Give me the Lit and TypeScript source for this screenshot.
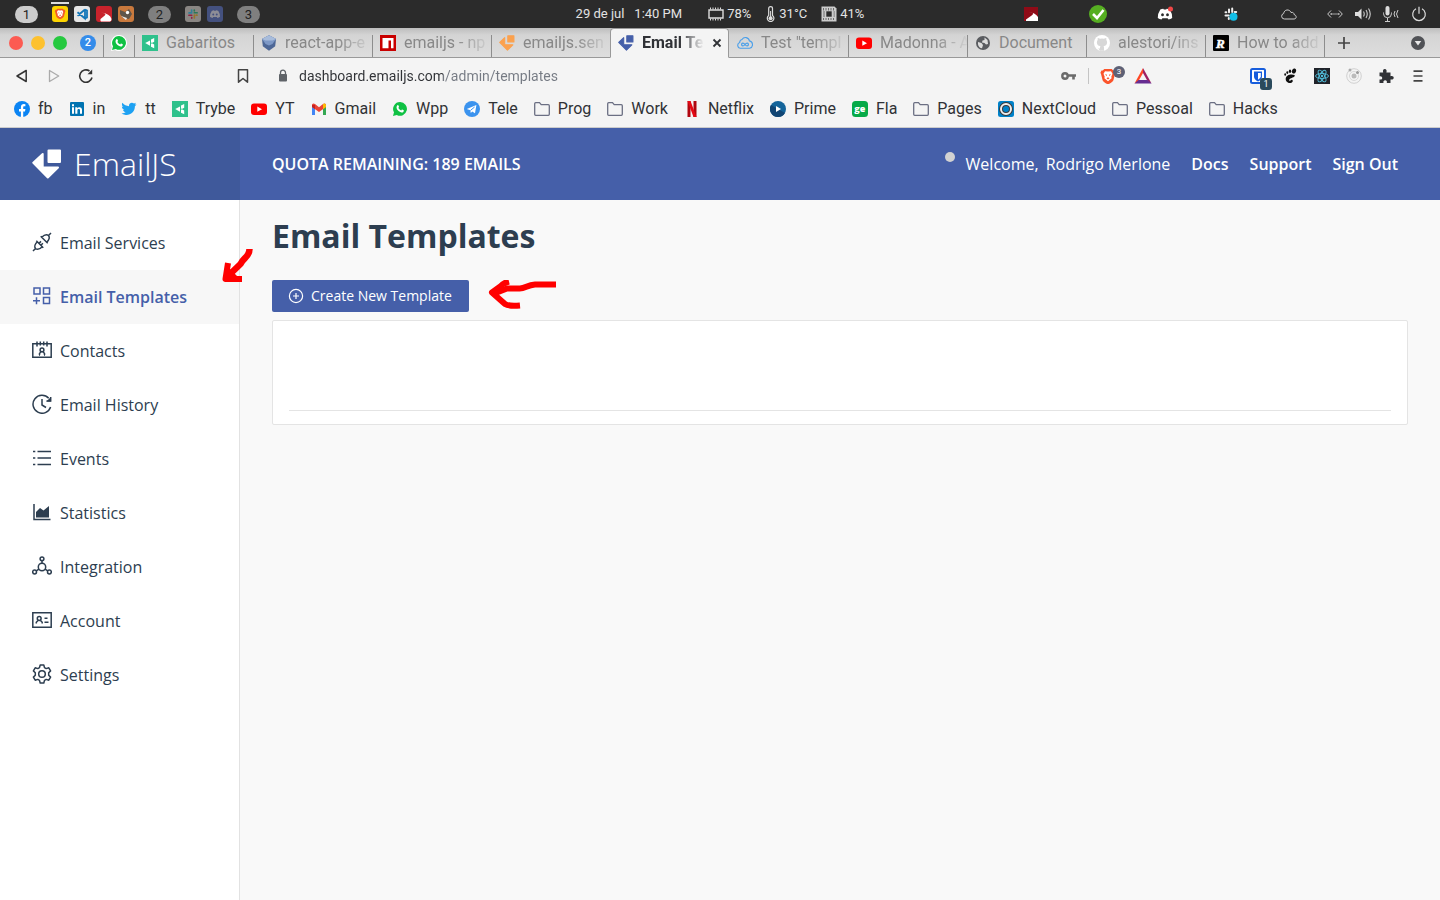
import { LitElement, html, css, svg, nothing, TemplateResult } from "lit";
import { customElement } from "lit/decorators.js";
import { classMap } from "lit/directives/class-map.js";

const icon = (box: string, body: unknown, cls = "i16") =>
  html`<svg class=${cls} viewBox=${box} fill="none" aria-hidden="true">${body}</svg>`;
const B = "0 0 16 16";

const whatsapp = (ring = false) => icon(B, svg`
  ${ring ? svg`<path d="M8 0a8 8 0 1 1-3.900 15L0 16l1-4A8 8 0 0 1 8 0z" fill="#fff"/>` : nothing}
  <path d="M8.100 1a6.900 6.900 0 1 1-3.300 13L1 15l1-3.700A6.900 6.900 0 0 1 8.100 1z" fill="#0fc143"/>
  <path d="M5.400 4.300c.5-.4.900-.2 1.100.3l.5 1.200c.1.300-.5.900-.6 1.100.7 1.300 1.600 2 2.800 2.500.3-.2.700-.9 1-.9l1.500.8c.3.200 0 1.200-.4 1.600-1.300 1.200-3.700.3-5.300-1.300S3.900 5.600 5.400 4.300z" fill="#fff"/>`);
const trybe = () => icon(B, svg`<path d="M0 0h16v16H0z" fill="#2fc18c"/><path d="M3.200 8.100L8 5.500v5.200zM9 7.300V4.500l3.200-1.600v3.900L9.800 8zM9 8.900l.8-.7 2.400 1.200v3.900L9 11.700z" fill="#fff"/>`);
const youtube = () => icon(B, svg`<rect y="2.500" width="16" height="11.500" rx="3" fill="#f00"/><path d="M6.300 5.600L11 8.200l-4.700 2.600z" fill="#fff"/>`);
const folder = () => icon(B, svg`<path d="M.7 13.300V2.700Q.7 1.700 1.700 1.700H5.500L7.200 3.700H14.300Q15.300 3.700 15.300 4.700V13.300Q15.300 14.300 14.300 14.300H1.700Q.7 14.300 .7 13.300z" stroke="#6b6f83" stroke-width="1.300"/>`);
const mark = (color: string) => icon("0 0 30 30", svg`<g fill=${color} stroke=${color} stroke-width="2" stroke-linejoin="round"><path d="M16.500 1.500h11.500v11.500H16.500z"/><path d="M10.700 5V18.500H26L15.800 28.500 1.300 13.700z"/></g>`);
const braveMark = (bg: string, fg: string) => svg`<path d="M4.300 1h7.400l1.600 1.500 1.300-.1 1 2.300-.6 1.300-1.600 6.200c-.4 1.300-3.900 3.800-5.400 3.800s-5-2.500-5.400-3.800L1 6 .4 4.700l1-2.300 1.300.1z" fill=${bg}/><path d="M8 3.600l3-.4 1.500 2.500-1.200 3.100.3 1.400L8 13.300l-3.600-3.100.3-1.400L3.500 5.700 5 3.200zM5.200 6l1.800.8-.6 1.500zM10.800 6L9 6.800l.6 1.500zM8 9.200l-1.500 1L8 11.500l1.500-1.300z" fill-rule="evenodd" fill=${fg}/>`;
const slackMark = () => svg`<g stroke-width="2.100" stroke-linecap="round"><path d="M6.300 3v3.600M3 6.600h2" stroke="#36c5f0"/><path d="M9.600 6.400h3.600M9.600 3v1" stroke="#2eb67d"/><path d="M9.700 9.500v3.500M12 9.500h1" stroke="#ecb22e"/><path d="M2.900 9.600h3.500M6.400 12.500v.6" stroke="#e01e5a"/></g>`;
const discordMark = (c: string, eye: string) => svg`<path d="M3.300 3.600Q5 2.700 6.300 2.700L6.800 3.500H9.200L9.700 2.700Q11.200 2.700 12.800 3.600 15.300 7.500 15.200 12 13.500 13.400 11.500 13.600L10.600 12.200H5.400L4.500 13.600Q2.500 13.400.8 12 .7 7.500 3.300 3.600z" fill=${c}/><ellipse cx="5.500" cy="8.800" rx="1.400" ry="1.500" fill=${eye}/><ellipse cx="10.500" cy="8.800" rx="1.400" ry="1.500" fill=${eye}/>`;

const tabIcons: Record<string, () => TemplateResult> = {
  trybe,
  box: () => icon(B, svg`<path d="M8 .3l7 3.600-.8 7.300L8 15.700l-6.200-4.500L1 3.900z" fill="#4d6796"/><path d="M8 .3l7 3.600-3.500 5L8 10.500 4.500 9 1 3.900z" fill="#7d98c6"/><path d="M8 .3l7 3.600-3.500 1.600h-7L1 3.900z" fill="#a8bcdb"/>`),
  npm: () => icon(B, svg`<path d="M0 0h16v16H0z" fill="#c90000"/><path d="M2.500 3h11v10.300h-2.500V5.500H8.500v7.800h-6z" fill="#fff"/>`),
  orange: () => mark("#fba14e"),
  blue: () => mark("#455fa9"),
  cloud: () => icon(B, svg`<path d="M4 13.300H3.500a3 3 0 0 1-.8-5.800A3 3 0 0 1 5 4.500a4 4 0 0 1 7.400 1.400 3.800 3.800 0 0 1 .3 7.400H4" stroke="#4a9fea" stroke-width="1.100"/><path d="M8 9.500C6.500 7.400 4.600 7.800 4.600 9.500s1.900 2.100 3.400 0 3.400-1.700 3.400 0-1.900 2.100-3.400 0z" stroke="#4a9fea" stroke-width="1.200"/>`),
  youtube,
  globe: () => icon(B, svg`<circle cx="8" cy="8" r="7" fill="#5a5c60"/><path d="M3 7l3.500 1L8 10l-1 3.300C4 13 2.700 10.500 3 7zM9.500 2.600L12.500 5l.5 4-2 .5L9.500 8 7 7.500l.5-2 2-.5z" fill="#ddd"/>`),
  github: () => icon(B, svg`<circle cx="8" cy="8" r="8" fill="#fff"/><path d="M6 15.700v-2.200c-2 .3-2.400-.8-3-1.500M10 15.700V12.800c0-.8-.2-1.200-.5-1.500 4.500-.6 4-5 2.700-6.200.3-.8.200-1.500 0-2.200-.8 0-1.500.4-2.200.9a8 8 0 0 0-4 0c-.7-.5-1.400-.9-2.200-.9-.2.7-.3 1.400 0 2.200-1.300 1.200-1.800 5.600 2.700 6.200-.4.400-.5.800-.5 1.400v3" fill="#d7d7d7"/>`),
  r: () => icon(B, svg`<rect width="16" height="16" rx="1" fill="#000"/><text x="3" y="12.500" font-family="Liberation Serif" font-size="13" font-weight="700" font-style="italic" fill="#fff" stroke="#fff" stroke-width=".5">R</text>`),
};

const tabs = [
  ["trybe", "Gabaritos"], ["box", "react-app-e"], ["npm", "emailjs - np"], ["orange", "emailjs.sen"],
  ["blue", "Email Te"], ["cloud", 'Test "templ'], ["youtube", "Madonna - A"], ["globe", "Document"],
  ["github", "alestori/ins"], ["r", "How to add"],
];

const bookmarks: [string, () => TemplateResult][] = [
  ["fb", () => icon(B, svg`<circle cx="8" cy="8" r="8" fill="#0b84f3"/><path d="M6.900 16v-5.600H5V8h1.900V6.300c0-2.200 1.200-3.200 3-3.200l1.500.1v2h-1c-1 0-1.200.5-1.200 1.200V8h2.200l-.4 2.400H9.200V16z" fill="#fff"/>`)],
  ["in", () => icon(B, svg`<rect x="1" y="1" width="14" height="14" rx="1" fill="#0073b1"/><path d="M3 6.300h2v6.500H3zM3 3.200h2v2H3zM6.300 6.300h2v1c1-1.700 4.700-1.600 4.700 1.500v4h-2V9.300c0-1.700-2.600-1.700-2.600 0v3.500H6.300z" fill="#fff"/>`)],
  ["tt", () => icon(B, svg`<path d="M15.500 3.500l-1.600 1.700c.2 5.500-5 9.600-10 8.500-1.300-.2-2.400-.6-3.400-1.300 1.700.1 3.200-.4 4.300-1.300-1.400-.2-2.400-1-2.800-2.200h1.300C1.700 8.300.9 7 .9 5.600l1.400.4C.8 4.900.6 3.200 1.400 1.800 3.200 3.900 5.400 5 8 5.200c-.5-3.200 3.100-4.600 5-2.700l2-.7-1.100 1.800z" fill="#1da1f2"/>`)],
  ["Trybe", trybe],
  ["YT", youtube],
  ["Gmail", () => icon(B, svg`<path d="M1 14V4h3v10z" fill="#4285f4"/><path d="M12 14V4h3v10z" fill="#34a853"/><path d="M1 3.500Q2.200 1.700 4 3l4 3.200L12 3q1.800-1.300 3 .5V6L8 11 1 6z" fill="#ea4335"/><path d="M12 3q1.800-1.300 3 .5V6l-3 2.200z" fill="#fbbc04"/><path d="M1 4v2l3 2V4z" fill="#c5221f"/>`)],
  ["Wpp", () => whatsapp()],
  ["Tele", () => icon(B, svg`<circle cx="8" cy="8" r="8" fill="#3b93ee"/><path d="M2.800 8L12.400 4 11 12.300 8.200 10.400 6.800 12 6.300 9.300z" fill="#fff"/><path d="M6.500 9.400L10.600 6" stroke="#3b93ee"/>`)],
  ["Prog", folder],
  ["Work", folder],
  ["Netflix", () => icon(B, svg`<path d="M3.500 0h3v16h-3zM9.500 0h3v16h-3z" fill="#b1060f"/><path d="M3.500 0h3l6 16h-3z" fill="#e50914"/>`)],
  ["Prime", () => icon(B, svg`<circle cx="8" cy="8" r="8" fill="#14649a"/><path d="M8 16A8 8 0 0 1 1 4l14 8a8 8 0 0 1-7 4z" fill="#124573"/><path d="M6 5l5 3-5 3z" fill="#fff"/>`)],
  ["Fla", () => icon(B, svg`<rect width="16" height="16" rx="3.500" fill="#06aa48"/><text x="2.200" y="10.500" font-family="Open Sans" font-size="9" font-weight="800" fill="#fff">ge</text>`)],
  ["Pages", folder],
  ["NextCloud", () => icon(B, svg`<rect width="16" height="16" rx="2.500" fill="#0082c9"/><circle cx="8" cy="8" r="5" stroke="#39393b" stroke-width="4"/><circle cx="8" cy="8" r="5" stroke="#eee" stroke-width="2"/>`)],
  ["Pessoal", folder],
  ["Hacks", folder],
];

const nav: [string, unknown][] = [
  ["Email Services", svg`<path d="M1 19l2.500-2.500M16.500 3.500L19 1M3.500 16.500C1.500 14 3.500 11.500 5.300 9.700L10.300 14.700C8.500 16.500 6 18.500 3.500 16.500zM16.500 3.500C14 1.500 11.500 3.500 9.700 5.300L14.700 10.300C16.500 8.500 18.500 6 16.500 3.500zM4.300 8.700l7 7M8.700 4.300l7 7M7 11.400l2-2M8.900 13.300l2-2"/>`],
  ["Email Templates", svg`<path d="M2 2h6v6H2zM11.500 2h6v6h-6zM11.500 11.500h6v6h-6zM1 14.700h7M4.500 11.200v7"/>`],
  ["Contacts", svg`<path d="M.8 3.800h18.400v13.400H.8zM5 1.500v5M8.300 1.500v4M11.700 1.500v4M15 1.500v5M7.500 15v-1.500L9 11.800M12.500 15v-1.500L11 11.800M8 15H7M13 15h-1"/><circle cx="10" cy="9.900" r="1.900"/>`],
  ["Email History", svg`<path d="M18.600 13A9 9 0 1 1 16.700 4.200M18.700 3v4h-4.200M10 5v6l4 2.500" /><path d="M18.900 3v4.500h-4.500z" fill="currentColor" stroke="none"/>`],
  ["Events", svg`<path d="M5.500 3.500H19M5.500 10H19M5.500 16.500H19M1 3.500h2.300M1 10h2.300M1 16.500h2.300" stroke-width="1.700"/>`],
  ["Statistics", svg`<path d="M2 2v15.500h16.500"/><path d="M4 15.500V10l4-4 3.500 2.500L17 4v11.500z" fill="currentColor" stroke="none"/>`],
  ["Integration", svg`<circle cx="10" cy="11" r="3.700"/><circle cx="10" cy="2.800" r="1.900"/><circle cx="2.600" cy="16" r="1.900"/><circle cx="17.400" cy="16" r="1.900"/><path d="M10 4.700v2.600M6.900 13.200l-2.600 1.700M13.100 13.200l2.600 1.700"/>`],
  ["Account", svg`<path d="M.8 2.800h18.400v14.400H.8zM4.300 13.500v-1.300L6 10.500M10.200 13.500v-1.300L8.500 10.500M12.500 8.300h3M12.500 12.300h4"/><circle cx="7.200" cy="8.500" r="1.900"/>`],
  ["Settings", svg`<path d="M8.200 1h3.600l.7 2.600 1.700 1 2.600-.8 1.800 3.100-1.900 1.900v2.400l1.900 1.900-1.800 3.100-2.600-.8-1.700 1-.7 2.600H8.200l-.7-2.600-1.700-1-2.600.8-1.800-3.100 1.900-1.900V8.800L1.400 6.900l1.800-3.100 2.600.8 1.700-1z" stroke-linejoin="round"/><circle cx="10" cy="10" r="3.300"/>`],
];

@customElement("system-bar")
class SystemBar extends LitElement {
  static styles = css`
    :host { display: grid; grid-template-columns: 1fr auto 1fr; align-items: center; height: 28px; background: #2b2b2b; color: #e3e3e3; font: 13px/16px Roboto, sans-serif; }
    .group { display: flex; align-items: center; }
    .spaces { padding-left: 15px; gap: 14px; }
    .apps { display: flex; gap: 6px; }
    .pill { width: 23px; height: 17px; border: 0; padding: 0; border-radius: 9px; background: #7f7f7f; color: #222; font: inherit; line-height: 17px; }
    .pill.on { background: #ccc; }
    .app { position: relative; display: flex; }
    .app.on::before { content: ""; position: absolute; left: -1px; right: -1px; top: -4px; height: 2px; background: #ddd; }
    .dim { opacity: .55; }
    .clock { gap: 10px; }
    .stats { gap: 14px; margin-left: 26px; }
    .stat { display: flex; align-items: center; gap: 3px; }
    .tray { justify-content: flex-end; gap: 50px; padding-right: 13px; }
    .sys { display: flex; gap: 12px; margin-left: -20px; }
    .cloud { margin-left: -8px; }
    svg { display: block; }
    .i16 { width: 16px; height: 16px; }
    .i18 { width: 18px; height: 18px; }
    .thin { width: 11px; height: 16px; }
  `;
  render() {
    return html`
      <div class="group spaces">
        <button class="pill on">1</button>
        <div class="apps">
          <span class="app on">${icon(B, svg`<rect width="16" height="16" rx="3" fill="#fdd400"/><g transform="translate(2.500 2) scale(.7)">${braveMark("#f1592a", "#fff")}</g>`)}</span>
          <span class="app">${icon(B, svg`<rect width="16" height="16" rx="3" fill="#e6e6e6"/><path d="M11 3.500v9L3.500 6.300M3.500 9.700L11 3.500M11 12.500l2-1V4.500l-2-1" stroke="#1276b8" stroke-width="1.800"/>`)}</span>
          <span class="app">${icon(B, svg`<rect width="16" height="16" rx="3" fill="#c8232c"/><path d="M5 6.500c3 .3 6 1.500 3.500 3.200L4.500 13q-.5 1.500.5 2.500h9Q15.500 15 15.500 13 14 7.500 5 6.500z" fill="#fff"/>`)}</span>
          <span class="app">${icon(B, svg`<rect width="16" height="16" rx="3" fill="#c9793d"/><path d="M2 4l5 2 4-3 3 5-3 5-6-1-3-4z" fill="#5f564b"/><circle cx="9.500" cy="6.500" r="1.700" fill="#fff"/><path d="M3 10l6 2-1 2z" fill="#eee"/>`)}</span>
        </div>
        <button class="pill">2</button>
        <div class="apps">
          <span class="app dim">${icon(B, svg`<rect width="16" height="16" rx="3" fill="#d8d2cc"/><g transform="translate(1.600 1.600) scale(.8)">${slackMark()}</g>`)}</span>
          <span class="app dim">${icon(B, svg`<rect width="16" height="16" rx="3" fill="#5a70c4"/><g transform="translate(2.400 2.400) scale(.7)">${discordMark("#dde", "#5a70c4")}</g>`)}</span>
        </div>
        <button class="pill">3</button>
      </div>
      <div class="group">
        <div class="group clock"><span>29 de jul</span><span>1:40 PM</span></div>
        <div class="group stats">
          <span class="stat">${icon(B, svg`<path d="M1 4h14v8H1z" stroke="#ddd" stroke-width="1.400"/><path d="M2.500 1.500v2M5 1.500v2M7.500 1.500v2M10 1.500v2M12.500 1.500v2M2.500 12.500v2M5 12.500v2M7.500 12.500v2M10 12.500v2M12.500 12.500v2" stroke="#ddd"/>`)}78%</span>
          <span class="stat">${icon("0 0 11 16", svg`<path d="M3.700 9.500V2.500a1.900 1.900 0 0 1 3.800 0v7a3.300 3.300 0 1 1-3.800 0z" stroke="#ddd" stroke-width="1.200"/><circle cx="5.600" cy="12.300" r="2" fill="#ddd"/><path d="M5.600 5v7" stroke="#ddd"/>`, "thin")}31°C</span>
          <span class="stat">${icon(B, svg`<path d="M.5.5h13l2 2v13H.5z" fill="#ccc"/><path d="M2.500 2v2.500M5 2v2.500M7.500 2v2.500M10 2v2.500M12.500 2v2.500M2.500 12v2M5 12v2M7.500 12v2M10 12v2M12.500 12v2M2 6h2M2 8h2M2 10h2M12.500 6h1.500M12.500 8H14M12.500 10H14" stroke="#2b2b2b" stroke-width=".6"/><path d="M5.300 5.300h5.400v5.400H5.300z" fill="#2b2b2b"/>`)}41%</span>
        </div>
      </div>
      <div class="group tray">
        ${icon(B, svg`<path d="M1 1h14v14H1z" fill="#8f0b17"/><path d="M5.500 6c4 .3 6 1.500 3.500 3.200L3 13.500V15h12V11Q12 6.500 5.500 6z" fill="#fff"/>`)}
        ${icon("0 0 18 18", svg`<circle cx="9" cy="9" r="9" fill="#56ae22"/><path d="M4 9l4 4 6.500-8" stroke="#fff" stroke-width="2.600"/>`, "i18")}
        ${icon(B, svg`${discordMark("#fff", "#2b2b2b")}<circle cx="13.500" cy="3" r="2.500" fill="#f04747"/>`)}
        ${icon(B, svg`<g stroke="#eee" stroke-width="2" stroke-linecap="round"><path d="M6 3.500v2.800M2.500 6.300h.8M9.200 2.500v3.500M11.700 6h1.500M2.500 9.500h3.300M5.800 12v1"/></g><circle cx="10.500" cy="10.700" r="4" fill="#12bfe8"/>`)}
        <span class="cloud">${icon(B, svg`<path d="M3.500 13a2.800 2.800 0 0 1-.8-5.500C3 3.500 8.500 2.500 10 6.500c2-.7 3.200.8 3 2 3 .8 2.800 4.500 0 4.500z" stroke="#ccc"/>`)}</span>
        <div class="sys">
          ${icon(B, svg`<path d="M4 4.500L.7 8 4 11.500M12 4.500L15.300 8 12 11.500" stroke="#ccc"/><path d="M3.500 8h2M6.500 8h1M8.500 8h1M10.500 8h2" stroke="#ccc" stroke-width="1.300"/>`)}
          ${icon(B, svg`<path d="M0 6h3l3.500-3.500v11L3 10H0z" fill="#ddd"/><path d="M8.500 5.500q1.500 2.500 0 5M11 4q2.500 4 0 8M13.500 2.500q3.500 5.500 0 11" stroke="#ccc" stroke-width="1.100"/>`)}
          ${icon(B, svg`<rect x="2.500" y="0" width="4" height="9.500" rx="2" fill="#ddd"/><path d="M.5 6.500v1.200q0 4 4 4t4-4V6.500M4.500 12v3.500M2 15.500h5M12 5q-2 3 0 6M15 4q-3 4 0 8" stroke="#ccc"/>`)}
          ${icon(B, svg`<path d="M5 2.700a6.300 6.300 0 1 0 6 0M8 .8v7" stroke="#ddd" stroke-width="1.200"/>`)}
        </div>
      </div>`;
  }
}

@customElement("browser-chrome")
class BrowserChrome extends LitElement {
  static styles = css`
    :host { display: block; background: #f4f4f4; border-bottom: 1px solid #ccc; color: #303236; font: 16px/20px Roboto, sans-serif; }
    svg { display: block; flex: none; }
    button { border: 0; padding: 0; background: none; color: inherit; font: inherit; display: flex; position: relative; }
    a { color: inherit; text-decoration: none; }
    .i16 { width: 16px; height: 16px; }
    .i20 { width: 18px; height: 18px; }
    .close { width: 10px; height: 10px; }
    .strip { display: flex; align-items: flex-end; height: 30px; box-sizing: border-box; background: linear-gradient(#bdbdbd, #d4d4d4 7px, #dedede 100%); }
    .lead, .pin, .tab, .end { box-sizing: border-box; display: flex; align-items: center; height: 30px; border-bottom: 1px solid #999; position: relative; }
    .lead { width: 103px; padding-left: 9px; gap: 8px; flex: none; }
    .dot { width: 14px; height: 14px; border-radius: 50%; }
    .red { background: #fc5b52; } .yellow { background: #fdc12f; } .green { background: #26c940; }
    .count { width: 16px; height: 16px; margin-left: 5px; border-radius: 50%; background: #348cea; color: #fff; font-size: 11px; font-weight: 500; line-height: 16px; text-align: center; }
    .pin { width: 31px; padding-left: 8px; flex: none; }
    .pin::before, .tab::before, .end::before { content: ""; position: absolute; left: 0; top: 7px; bottom: 0; width: 1px; background: #8d8d8d; }
    .tab { flex: 0 1 119px; min-width: 0; padding: 0 0 0 8px; gap: 8px; color: #888; }
    .title { flex: 1; white-space: nowrap; }
    .fade { -webkit-mask-image: linear-gradient(90deg, #000 60%, transparent); mask-image: linear-gradient(90deg, #000 60%, transparent); }
    .tab.on { background: #f4f4f4; border: 1px solid #999; border-bottom-color: #f4f4f4; border-radius: 4px 4px 0 0; color: #303236; font-weight: 700; padding: 0 6px 0 7px; }
    .tab.on::before, .tab.on + .tab::before { display: none; }
    .end { flex: 1; justify-content: space-between; padding: 0 14px 0 12px; color: #444; }
    .row { display: flex; align-items: center; height: 36px; padding: 0 14px; }
    .navs { display: flex; gap: 16px; width: 221px; flex: none; }
    .address { flex: 1; display: flex; align-items: center; gap: 24px; min-width: 0; }
    .field { flex: 1; display: flex; align-items: center; gap: 8px; }
    .url { flex: 1; min-width: 0; border: 0; padding: 0; outline: 0; font: 14px/20px Roboto, sans-serif; color: transparent; background: linear-gradient(90deg, #303236 144px, #757a83 144px); -webkit-background-clip: text; background-clip: text; }
    .shields { display: flex; align-items: center; gap: 18px; margin-right: 98px; }
    .bar { width: 1px; height: 16px; background: #c4c4c4; margin: 0 -7px 0 -6px; }
    .exts { display: flex; gap: 16px; }
    .badge { position: absolute; right: -9px; top: -2px; width: 12px; height: 12px; border-radius: 50%; background: #5e6175; color: #fff; font-size: 8px; line-height: 12px; text-align: center; }
    .badge.square { right: -6px; top: 10px; border-radius: 3px; background: #2a4a5c; font-size: 9px; }
    .marks { box-sizing: border-box; display: flex; align-items: center; gap: 16px; height: 33px; padding: 0 14px 3px; }
    .mark { display: flex; align-items: center; gap: 8px; white-space: nowrap; }
  `;
  render() {
    return html`
      <div class="strip">
        <div class="lead"><span class="dot red"></span><span class="dot yellow"></span><span class="dot green"></span><span class="count">2</span></div>
        <div class="pin">${whatsapp(true)}</div>
        ${tabs.map(([key, title]) => {
          const on = key === "blue";
          const fade = key !== "trybe" && key !== "globe";
          return html`<div class=${classMap({ tab: true, on })}>${tabIcons[key]()}<span class=${classMap({ title: true, fade })}>${title}</span>
          ${on ? html`<button aria-label="Close tab">${icon("0 0 10 10", svg`<path d="M1.500 1.500l7 7M8.500 1.500l-7 7" stroke="#303236" stroke-width="1.800"/>`, "close")}</button>` : nothing}</div>`;
        })}
        <div class="end">
          <button aria-label="New tab">${icon(B, svg`<path d="M8 2v12M2 8h12" stroke="#444" stroke-width="1.700"/>`)}</button>
          <button aria-label="Search tabs">${icon(B, svg`<circle cx="8" cy="8" r="7" fill="#505256"/><path d="M4.700 6h6.600L8 10.500z" fill="#e8e8e8"/>`)}</button>
        </div>
      </div>
      <div class="row">
        <div class="navs">
          <button aria-label="Back">${icon(B, svg`<path d="M12.200 2.500v11L3 8z" stroke="#333" stroke-width="1.500" stroke-linejoin="round"/>`)}</button>
          <button aria-label="Forward">${icon(B, svg`<path d="M3.500 2.500v11L12.700 8z" stroke="#aaa" stroke-width="1.300" stroke-linejoin="round"/>`)}</button>
          <button aria-label="Reload">${icon(B, svg`<path d="M14 9.500A6.200 6.200 0 1 1 11.500 3" stroke="#333" stroke-width="1.600"/><path d="M14.200 1.500v4.800H9.500z" fill="#333"/>`)}</button>
        </div>
        <div class="address">
          <button aria-label="Bookmark this page">${icon(B, svg`<path d="M3.500 1.700h9v12.500L8 10.500l-4.500 3.700z" stroke="#444" stroke-width="1.500" stroke-linejoin="round"/>`)}</button>
          <label class="field">${icon(B, svg`<rect x="4" y="6" width="8" height="7.500" rx="1" fill="#5f6368"/><path d="M5.500 7V4.700a2.500 2.500 0 0 1 5 0V7" stroke="#5f6368" stroke-width="1.300"/>`)}<input class="url" aria-label="Address" value="dashboard.emailjs.com/admin/templates"></label>
        </div>
        <div class="shields">
          <button aria-label="Passwords">${icon(B, svg`<circle cx="5" cy="8" r="2.700" stroke="#6b6b6b" stroke-width="2.400"/><path d="M8 7.500h8M13.500 8v3.500" stroke="#6b6b6b" stroke-width="2.600"/>`)}</button>
          <span class="bar"></span>
          <button aria-label="Shields">${icon(B, braveMark("#fb542b", "#fff"))}<span class="badge">3</span></button>
          <button aria-label="Rewards">${icon("0 0 18 18", svg`<path d="M9 1L.5 16.500 4.500 14 9 6z" fill="#ff4724"/><path d="M9 1l8.500 15.500L13.500 14 9 6z" fill="#9e1f63"/><path d="M.5 16.500h17L13.500 13h-9z" fill="#662d91"/>`, "i20")}</button>
        </div>
        <div class="exts">
          <button aria-label="Vault">${icon(B, svg`<rect x="1" y="1" width="14" height="14" rx="1.500" fill="#fff" stroke="#175ddc" stroke-width="2"/><path d="M4 3.500h8v5q0 3-4 5-4-2-4-5z" fill="#175ddc"/><path d="M8 5h2.800v3.500q0 1.500-2.800 3.200z" fill="#fff"/>`)}<span class="badge square">1</span></button>
          <button aria-label="Shell integration">${icon(B, svg`<g fill="#111"><ellipse cx="12" cy="3" rx="2" ry="2.600" transform="rotate(20 12 3)"/><ellipse cx="8" cy="3.300" rx="1.200" ry="1.700"/><ellipse cx="5.300" cy="4.600" rx="1" ry="1.400"/><ellipse cx="3.200" cy="6.500" rx=".9" ry="1.200"/><path d="M12.500 7C9 5.500 4 7 3.700 10.500 3.500 14 7 16 9.500 14.700c2-1 1.500-3 0-3-1 0-.8 1.300-2 1-1-.4 0-2 1.500-2.500C11 9.500 13.500 8.500 12.500 7z"/></g>`)}</button>
          <button aria-label="React tools">${icon(B, svg`<path d="M0 0h16v16H0z" fill="#20232a"/><g stroke="#53c1de" stroke-width=".9"><ellipse cx="8" cy="8" rx="6.500" ry="2.500"/><ellipse cx="8" cy="8" rx="6.500" ry="2.500" transform="rotate(60 8 8)"/><ellipse cx="8" cy="8" rx="6.500" ry="2.500" transform="rotate(120 8 8)"/></g><circle cx="8" cy="8" r="1.200" fill="#53c1de"/>`)}</button>
          <button aria-label="State tools">${icon(B, svg`<circle cx="8" cy="8" r="7.300" stroke="#d0d0d0"/><circle cx="8" cy="8" r="4.500" stroke="#d8d8d8"/><circle cx="8" cy="8" r="2.500" fill="#bbb"/><circle cx="4" cy="2" r="1.500" fill="#aaa"/><circle cx="11.500" cy="4.500" r="1.500" fill="#999"/>`)}</button>
          <button aria-label="Extensions">${icon(B, svg`<path d="M1.500 4.500h3.700C4.500 2.500 5.300 1 6.800 1s2.300 1.500 1.600 3.500h4.100v3.700c2-.6 3.200.3 3.200 1.600s-1.200 2.200-3.200 1.600V15H8.800c.5-1.800-.3-2.800-1.600-2.800S5 13.200 5.500 15h-4v-3.500c1.800.4 2.700-.4 2.700-1.600S3.300 7.900 1.500 8.300z" fill="#303236"/>`)}</button>
          <button aria-label="Menu">${icon(B, svg`<path d="M3.500 3.200h9M3.500 8h9M3.500 12.800h9" stroke="#444" stroke-width="1.700"/>`)}</button>
        </div>
      </div>
      <div class="marks">${bookmarks.map(([name, draw]) => html`<a class="mark" href="#">${draw()}<span>${name}</span></a>`)}</div>`;
  }
}

@customElement("app-root")
class AppRoot extends LitElement {
  static styles = css`
    :host { display: flex; flex-direction: column; min-height: 100vh; background: #f9f9f9; color: #2d3e50; font: 16px/24px "Open Sans", sans-serif; }
    a { color: inherit; text-decoration: none; }
    svg { display: block; flex: none; }
    .top { display: flex; height: 72px; background: #455fa9; color: #fff; }
    .brand { box-sizing: border-box; width: 240px; flex: none; display: flex; align-items: center; gap: 12px; padding-left: 32px; background: #3f599b; font-size: 32px; font-weight: 300; line-height: 40px; }
    .brand svg { width: 30px; height: 30px; }
    .account { flex: 1; display: flex; align-items: center; justify-content: space-between; padding: 0 42px 0 32px; font-weight: 600; }
    .links { display: flex; align-items: center; gap: 21px; }
    .hello { display: flex; gap: 7px; font-weight: 400; }
    .status { width: 10px; height: 10px; margin-right: 4px; border-radius: 50%; background: #d2d2d2; }
    .body { flex: 1; display: flex; }
    .side { box-sizing: border-box; width: 240px; flex: none; padding-top: 16px; background: #fff; border-right: 1px solid #e2e2e2; }
    .item { position: relative; display: flex; align-items: center; gap: 8px; height: 54px; padding-left: 32px; }
    .item.on { background: #f7f7f7; color: #455fa9; font-weight: 600; }
    .glyph { width: 20px; height: 20px; margin-bottom: 2px; stroke: currentColor; stroke-width: 1.500; }
    .pointer { position: absolute; right: -16px; top: -24px; width: 34px; height: 40px; z-index: 1; }
    .main { flex: 1; min-width: 0; padding: 16px 32px; }
    h1 { margin: 0 0 24px; font-size: 32px; line-height: 40px; font-weight: 700; }
    .actions { display: flex; align-items: center; gap: 18px; height: 32px; margin-bottom: 8px; }
    .create { display: flex; align-items: center; gap: 7px; height: 32px; padding: 0 17px 0 16px; border: 0; border-radius: 2px; background: #455fa9; color: #fff; font: 14px/20px "Open Sans", sans-serif; }
    .i16 { width: 16px; height: 16px; }
    .scrawl { width: 70px; height: 32px; }
    .card { padding: 0 16px 13px; background: #fff; border: 1px solid #e4e4e4; border-radius: 2px; }
    .blank { height: 89px; border-bottom: 1px solid #e4e4e4; }
  `;
  render() {
    return html`
      <system-bar></system-bar>
      <browser-chrome></browser-chrome>
      <header class="top">
        <a class="brand" href="#">${mark("#fff")}<span>EmailJS</span></a>
        <div class="account">
          <span>QUOTA REMAINING: 189 EMAILS</span>
          <div class="links">
            <div class="hello"><span class="status"></span><span>Welcome,</span><span>Rodrigo Merlone</span></div>
            <a href="#">Docs</a><a href="#">Support</a><a href="#">Sign Out</a>
          </div>
        </div>
      </header>
      <div class="body">
        <nav class="side">
          ${nav.map(([name, body]) => {
            const on = name === "Email Templates";
            return html`<a class=${classMap({ item: true, on })} href="#">${icon("0 0 20 20", body, "glyph")}<span>${name}</span>
            ${on ? icon("0 0 34 40", svg`<path d="M28.500 3C28.500 11 22 12 19.500 18L5 32" stroke="red" stroke-width="6.500"/><path d="M7 17L4.500 33H21" stroke="red" stroke-width="6" stroke-linejoin="round"/><path d="M6 20L18 32H5z" fill="red"/>`, "pointer") : nothing}</a>`;
          })}
        </nav>
        <main class="main">
          <h1>Email Templates</h1>
          <div class="actions">
            <button class="create">${icon(B, svg`<circle cx="8" cy="8" r="6.600" stroke="#fff" stroke-width="1.200"/><path d="M8 5v6M5 8h6" stroke="#fff" stroke-width="1.200"/>`)}Create New Template</button>
            ${icon("0 0 70 32", svg`<path d="M69 4.500H48C40 5 38 9 32 8.500H20L6 14" stroke="red" stroke-width="6"/><path d="M22 1.500Q16 3 14 6L5 12.500 18 24Q22 26.500 33 25.500" stroke="red" stroke-width="6" stroke-linejoin="round"/>`, "scrawl")}
          </div>
          <section class="card"><div class="blank"></div></section>
        </main>
      </div>`;
  }
}
